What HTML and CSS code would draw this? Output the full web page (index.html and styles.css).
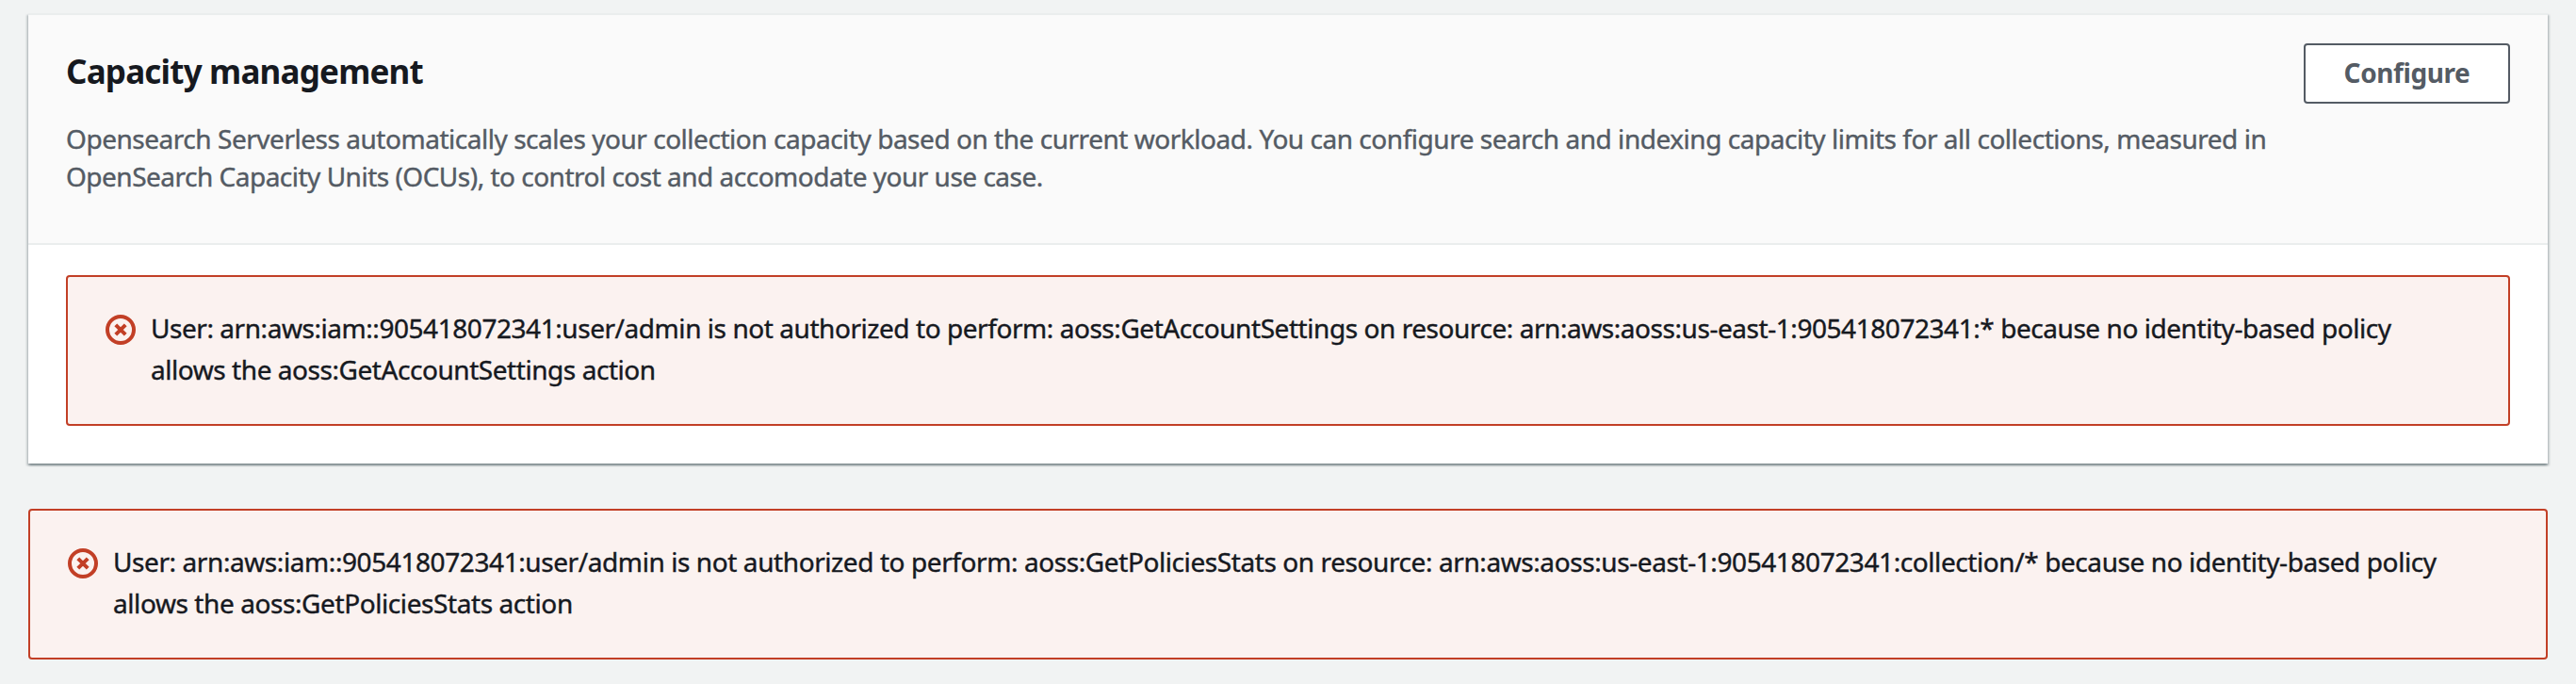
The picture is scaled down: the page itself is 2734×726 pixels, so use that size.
FILE: index.html
```html
<!DOCTYPE html>
<html lang="en">
<head>
<meta charset="utf-8">
<title>Capacity management</title>
<link rel="stylesheet" href="styles.css">
</head>
<body>
<main class="page">
  <section class="card">
    <header class="card-header">
      <div class="card-heading">
        <h2 class="card-title">Capacity management</h2>
        <p class="card-description"><span class="desc-a">Opensearch Serverless automatically scales your collection capacity based on the current workload. You can configure search and indexing capacity limits for all collections, measured in</span><br><span class="desc-b">OpenSearch Capacity Units (OCUs), to control cost and accomodate your use case.</span></p>
      </div>
      <button class="button" type="button">Configure</button>
    </header>
    <div class="card-body">
      <div class="alert" role="alert">
        <svg class="alert-icon" viewBox="0 0 16 16" aria-hidden="true"><circle cx="8" cy="8" r="7"/><path d="M10.6 5.4L5.4 10.6M5.4 5.4l5.2 5.2"/></svg>
        <p class="alert-text">User: arn:aws:iam::905418072341:user/admin is not authorized to perform: aoss:GetAccountSettings on resource: arn:aws:aoss:us-east-1:905418072341:* because no identity-based policy<br>allows the aoss:GetAccountSettings action</p>
      </div>
    </div>
  </section>
  <div class="alert" role="alert">
    <svg class="alert-icon" viewBox="0 0 16 16" aria-hidden="true"><circle cx="8" cy="8" r="7"/><path d="M10.6 5.4L5.4 10.6M5.4 5.4l5.2 5.2"/></svg>
    <p class="alert-text alert-text-policies">User: arn:aws:iam::905418072341:user/admin is not authorized to perform: aoss:GetPoliciesStats on resource: arn:aws:aoss:us-east-1:905418072341:collection/* because no identity-based policy<br>allows the aoss:GetPoliciesStats action</p>
  </div>
</main>
</body>
</html>
```
FILE: styles.css
```css
* { box-sizing: border-box; }

body {
  margin: 0;
  background: #f1f3f3;
  color: #16191f;
  font-family: "Noto Sans", "Open Sans", sans-serif;
  font-size: 28px;
}

.page {
  display: flex;
  flex-direction: column;
  gap: 48px;
  padding: 14px 30px 26px;
}

.card {
  height: 478px;
  background: #fff;
  border-top: 2px solid #eaeded;
  box-shadow:
    0 2px 2px 0 rgba(0, 28, 36, 0.3),
    2px 2px 2px 0 rgba(0, 28, 36, 0.15),
    -2px 2px 2px 0 rgba(0, 28, 36, 0.15);
}

.card-header {
  display: flex;
  justify-content: space-between;
  align-items: flex-start;
  height: 244px;
  padding: 30px 40px 0;
  background: #fafafa;
  border-bottom: 2px solid #eaeded;
}

.card-heading { padding-top: 8px; }

.card-title {
  margin: 0;
  font-size: 35px;
  font-weight: 700;
  line-height: 44px;
  letter-spacing: -0.8px;
}

.card-description {
  margin: 29px 0 0;
  color: #545b64;
  line-height: 40px;
  white-space: nowrap;
  -webkit-text-stroke: 0.4px currentColor;
}

.desc-a { letter-spacing: -0.468px; }
.desc-b { letter-spacing: -0.505px; }

.button {
  width: 219px;
  height: 64px;
  flex: none;
  padding: 0 0 2px;
  background: #fff;
  border: 2px solid #545b64;
  border-radius: 4px;
  color: #545b64;
  font: 700 28px/40px "Noto Sans", "Open Sans", sans-serif;
  letter-spacing: -0.4px;
}

.card-body { padding: 32px 40px 40px; }

.alert {
  display: flex;
  align-items: flex-start;
  height: 160px;
  padding: 32px 40px 0;
  background: #fbf2f0;
  border: 2px solid #c23f26;
  border-radius: 4px;
}

.alert-icon {
  width: 32px;
  height: 32px;
  flex: none;
  margin: 8px 16px 0 0;
  fill: none;
  stroke: #c23f26;
  stroke-width: 2;
}

.alert-text {
  margin: 0;
  line-height: 44px;
  letter-spacing: -0.445px;
  white-space: nowrap;
  -webkit-text-stroke: 0.4px currentColor;
}

.alert-text-policies { letter-spacing: -0.413px; }
```
